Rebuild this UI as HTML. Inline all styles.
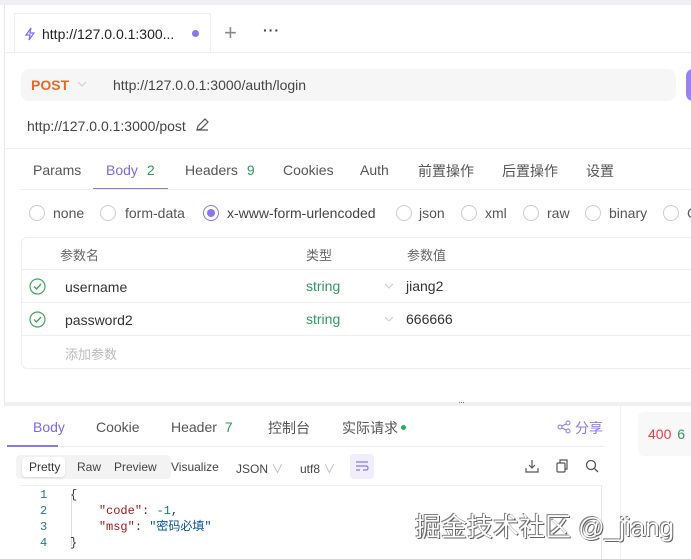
<!DOCTYPE html>
<html><head><meta charset="utf-8"><style>
*{box-sizing:border-box;margin:0;padding:0}
body{width:691px;height:559px;overflow:hidden;background:#fff;font-family:"Liberation Sans","Noto Sans CJK SC",sans-serif;color:#333;position:relative;font-size:13px}
.a{position:absolute;white-space:nowrap}
.radio{position:absolute;width:16px;height:16px;border:1px solid #ccc;border-radius:50%;background:#fff}
.hl{position:absolute;height:1px;background:#eee}
.g{color:#2e9a5e}
</style></head><body>
<div class="a" style="left:0;top:0;width:691px;height:5px;background:#eef0f3"></div>
<div class="a" style="left:4px;top:5px;width:1px;height:398px;background:#e8e8e8"></div>
<div class="a" style="left:14px;top:13px;width:197px;height:40px;border:1px solid #eee;border-bottom:none;background:#fff"></div>
<svg class="a" style="left:24px;top:27px" width="12" height="14" viewBox="0 0 12 14"><path d="M7 1 L2 8 H6 L5 13 L10 6 H6 Z" fill="none" stroke="#7a6df0" stroke-width="1.2"/></svg>
<div class="a" style="left:42px;top:26px;font-size:14px;color:#222">http://127.0.0.1:300...</div>
<div class="a" style="left:192px;top:30px;width:7px;height:7px;border-radius:50%;background:#8a78e8"></div>
<div class="a" style="left:224px;top:20px;font-size:22px;color:#888;font-weight:300">+</div>
<div class="a" style="left:263px;top:22px;font-size:14px;color:#444;font-weight:bold;letter-spacing:1px">···</div>
<div class="hl" style="left:5px;top:52px;width:686px"></div>
<div class="a" style="left:21px;top:69px;width:655px;height:32px;background:#f6f6f7;border-radius:8px"></div>
<div class="a" style="left:31px;top:77px;font-size:14px;font-weight:bold;color:#e8692b">POST</div>
<svg class="a" style="left:77px;top:81px" width="10" height="6"><path d="M1 1 L5 5 L9 1" stroke="#ccc" fill="none"/></svg>
<div class="a" style="left:113px;top:77px;font-size:14px;color:#444">http://127.0.0.1:3000/auth/login</div>
<div class="a" style="left:686px;top:69px;width:20px;height:32px;background:#9b82f0;border-radius:7px"></div>
<div class="a" style="left:27px;top:118px;font-size:14px;color:#444">http://127.0.0.1:3000/post</div>
<svg class="a" style="left:195px;top:118px" width="14" height="14"><path d="M2 12 L3 8 L10 1 L13 4 L6 11 Z M2 12 H13" stroke="#555" fill="none" stroke-width="1.2"/></svg>
<div class="hl" style="left:5px;top:148px;width:686px"></div>
<div class="a" style="left:33px;top:162px;font-size:14px;color:#555">Params</div>
<div class="a" style="left:106px;top:162px;font-size:14px;color:#7d6ae0">Body <span class="g" style="margin-left:5px">2</span></div>
<div class="a" style="left:93px;top:188px;width:75px;height:2px;background:#8a78e8"></div>
<div class="a" style="left:185px;top:162px;font-size:14px;color:#555">Headers <span class="g" style="margin-left:5px">9</span></div>
<div class="a" style="left:283px;top:162px;font-size:14px;color:#555">Cookies</div>
<div class="a" style="left:360px;top:162px;font-size:14px;color:#555">Auth</div>
<div class="a" style="left:418px;top:161px;font-size:14px;color:#555">前置操作</div>
<div class="a" style="left:502px;top:161px;font-size:14px;color:#555">后置操作</div>
<div class="a" style="left:586px;top:161px;font-size:14px;color:#555">设置</div>
<div class="hl" style="left:20px;top:189px;width:671px"></div>
<div class="radio" style="left:29px;top:205px"></div><div class="a" style="left:53px;top:205px;font-size:14px;color:#555">none</div>
<div class="radio" style="left:100px;top:205px"></div><div class="a" style="left:125px;top:205px;font-size:14px;color:#555">form-data</div>
<div class="radio" style="left:203px;top:205px;border-color:#8a78e8"></div><div class="a" style="left:207px;top:209px;width:8px;height:8px;border-radius:50%;background:#8a78e8"></div>
<div class="a" style="left:227px;top:205px;font-size:14px;color:#444">x-www-form-urlencoded</div>
<div class="radio" style="left:396px;top:205px"></div><div class="a" style="left:419px;top:205px;font-size:14px;color:#555">json</div>
<div class="radio" style="left:461px;top:205px"></div><div class="a" style="left:485px;top:205px;font-size:14px;color:#555">xml</div>
<div class="radio" style="left:523px;top:205px"></div><div class="a" style="left:547px;top:205px;font-size:14px;color:#555">raw</div>
<div class="radio" style="left:585px;top:205px"></div><div class="a" style="left:609px;top:205px;font-size:14px;color:#555">binary</div>
<div class="radio" style="left:663px;top:205px"></div><div class="a" style="left:687px;top:205px;font-size:14px;color:#555">G</div>
<div class="a" style="left:21px;top:237px;width:680px;height:132px;border:1px solid #eee;border-radius:6px"></div>
<div class="hl" style="left:21px;top:269px;width:670px"></div>
<div class="hl" style="left:21px;top:302px;width:670px"></div>
<div class="hl" style="left:21px;top:335px;width:670px"></div>
<div class="a" style="left:60px;top:245px;font-size:13px;color:#666">参数名</div>
<div class="a" style="left:306px;top:245px;font-size:13px;color:#666">类型</div>
<div class="a" style="left:407px;top:245px;font-size:13px;color:#666">参数值</div>
<svg class="a" style="left:29px;top:278px" width="17" height="17"><circle cx="8.5" cy="8.5" r="7.5" fill="none" stroke="#3ea85e" stroke-width="1.2"/><path d="M5 8.5 L7.5 11 L12 6" fill="none" stroke="#3ea85e" stroke-width="1.4"/></svg>
<svg class="a" style="left:29px;top:311px" width="17" height="17"><circle cx="8.5" cy="8.5" r="7.5" fill="none" stroke="#3ea85e" stroke-width="1.2"/><path d="M5 8.5 L7.5 11 L12 6" fill="none" stroke="#3ea85e" stroke-width="1.4"/></svg>
<div class="a" style="left:65px;top:279px;font-size:14px;color:#333">username</div>
<div class="a" style="left:306px;top:278px;font-size:14px"><span class="g">string</span></div>
<svg class="a" style="left:384px;top:283px" width="10" height="6"><path d="M1 1 L5 5 L9 1" stroke="#ccc" fill="none"/></svg>
<div class="a" style="left:406px;top:278px;font-size:14px;color:#333">jiang2</div>
<div class="a" style="left:65px;top:312px;font-size:14px;color:#333">password2</div>
<div class="a" style="left:306px;top:311px;font-size:14px"><span class="g">string</span></div>
<svg class="a" style="left:384px;top:316px" width="10" height="6"><path d="M1 1 L5 5 L9 1" stroke="#ccc" fill="none"/></svg>
<div class="a" style="left:406px;top:311px;font-size:14px;color:#333">666666</div>
<div class="a" style="left:65px;top:344px;font-size:13px;color:#bbb">添加参数</div>
<div class="a" style="left:4px;top:402px;width:687px;height:4px;background:#eef0f3"></div>
<div class="a" style="left:458px;top:397px;font-size:9px;color:#666;letter-spacing:-1px">···</div>
<div class="a" style="left:620px;top:406px;width:1px;height:153px;background:#eee"></div>
<div class="a" style="left:638px;top:412px;width:60px;height:44px;background:#f8f8f9;border-radius:6px"></div>
<div class="a" style="left:648px;top:426px;font-size:14px;color:#e84040">400 <span class="g" style="margin-left:2px">6</span></div>
<div class="a" style="left:33px;top:419px;font-size:14px;color:#7d6ae0">Body</div>
<div class="a" style="left:7px;top:445px;width:51px;height:2px;background:#8a78e8"></div>
<div class="a" style="left:96px;top:419px;font-size:14px;color:#555">Cookie</div>
<div class="a" style="left:171px;top:419px;font-size:14px;color:#555">Header <span class="g" style="margin-left:4px">7</span></div>
<div class="a" style="left:268px;top:418px;font-size:14px;color:#555">控制台</div>
<div class="a" style="left:342px;top:418px;font-size:14px;color:#555">实际请求</div>
<div class="a" style="left:401px;top:425px;width:5px;height:5px;border-radius:50%;background:#2eaa5e"></div>
<svg class="a" style="left:557px;top:420px" width="14" height="14"><circle cx="3" cy="7" r="2" fill="none" stroke="#8a78e8"/><circle cx="11" cy="3" r="2" fill="none" stroke="#8a78e8"/><circle cx="11" cy="11" r="2" fill="none" stroke="#8a78e8"/><path d="M5 6 L9 4 M5 8 L9 10" stroke="#8a78e8"/></svg>
<div class="a" style="left:575px;top:418px;font-size:14px;color:#8a78e8">分享</div>
<div class="hl" style="left:58px;top:446px;width:547px"></div>
<div class="a" style="left:16px;top:455px;width:155px;height:24px;background:#f3f3f4;border-radius:4px"></div>
<div class="a" style="left:22px;top:457px;width:43px;height:20px;background:#fff;border-radius:4px;box-shadow:0 1px 2px rgba(0,0,0,.1)"></div>
<div class="a" style="left:29px;top:460px;font-size:12px;color:#333">Pretty</div>
<div class="a" style="left:77px;top:460px;font-size:12px;color:#444">Raw</div>
<div class="a" style="left:114px;top:460px;font-size:12px;color:#444">Preview</div>
<div class="a" style="left:171px;top:460px;font-size:12px;color:#444">Visualize</div>
<div class="a" style="left:236px;top:460px;font-size:12px;color:#444">JSON <span style="color:#bbb">∨</span></div>
<div class="a" style="left:300px;top:460px;font-size:12px;color:#444">utf8 <span style="color:#bbb">∨</span></div>
<div class="a" style="left:350px;top:454px;width:24px;height:25px;background:#f0eefc;border-radius:4px"></div>
<svg class="a" style="left:355px;top:460px" width="14" height="12"><path d="M1 2 H13 M1 6 H11 Q13 6 13 8 Q13 10 11 10 H8 M1 10 H5" stroke="#8a78e8" fill="none" stroke-width="1.2"/></svg>
<svg class="a" style="left:525px;top:459px" width="14" height="14"><path d="M7 1 V9 M4 6 L7 9 L10 6 M1 9 V13 H13 V9" stroke="#555" fill="none" stroke-width="1.2"/></svg>
<svg class="a" style="left:555px;top:459px" width="14" height="14"><rect x="2" y="4" width="8" height="9" rx="1" stroke="#555" fill="none" stroke-width="1.2"/><path d="M5 4 V1 H12 V10 H10" stroke="#555" fill="none" stroke-width="1.2"/></svg>
<svg class="a" style="left:585px;top:459px" width="14" height="14"><circle cx="6" cy="6" r="4.5" stroke="#555" fill="none" stroke-width="1.3"/><path d="M9.5 9.5 L13 13" stroke="#555" stroke-width="1.3"/></svg>
<div class="hl" style="left:20px;top:485px;width:582px"></div>
<div class="a" style="left:601px;top:486px;width:1px;height:73px;background:#e8e8e8"></div>
<div class="a" style="left:71px;top:496px;width:1px;height:50px;background:#ddd"></div>
<div class="a" style="left:40px;top:487px;font-family:'Liberation Mono',monospace;font-size:12px;color:#237893;line-height:16px">1<br>2<br>3<br>4</div>
<div class="a" style="left:70px;top:487px;font-family:'Liberation Mono','Noto Sans CJK SC',monospace;font-size:12px;line-height:16px;color:#333">{<br>&nbsp;&nbsp;&nbsp;&nbsp;<span style="color:#a31515">"code"</span>: <span style="color:#098658">-1</span>,<br>&nbsp;&nbsp;&nbsp;&nbsp;<span style="color:#a31515">"msg"</span>: <span style="color:#0451a5">"密码必填"</span><br>}</div>
<div class="a" style="left:415px;top:507px;font-size:26px;color:#fff;text-shadow:0 0 1px #555,1px 1px 0 #666,-1px -1px 0 #888">掘金技术社区 @_jiang</div>
</body></html>
